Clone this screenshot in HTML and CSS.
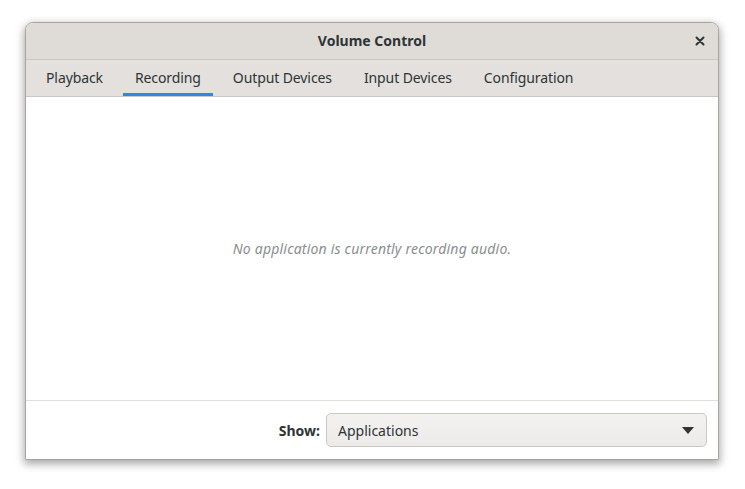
FILE: index.html
```html
<!DOCTYPE html>
<html>
<head>
<meta charset="utf-8">
<link rel="stylesheet" href="styles.css">
</head>
<body>
<div class="window">
  <div class="titlebar">
    <div class="title">Volume Control</div>
    <div class="close">
      <svg width="10" height="10" viewBox="0 0 10 10"><path d="M1.5 1.5 L8.5 8.5 M8.5 1.5 L1.5 8.5" stroke="#2e3436" stroke-width="2" stroke-linecap="round"/></svg>
    </div>
  </div>
  <div class="tabs">
    <div class="tab">Playback</div>
    <div class="tab active">Recording</div>
    <div class="tab">Output Devices</div>
    <div class="tab">Input Devices</div>
    <div class="tab">Configuration</div>
  </div>
  <div class="content">
    <div class="empty">No application is currently recording audio.</div>
  </div>
  <div class="footer">
    <span class="show">Show:</span>
    <div class="combo">
      <span>Applications</span>
      <svg width="12" height="7" viewBox="0 0 12 7"><path d="M0 0 L12 0 L6 7 Z" fill="#2e3436"/></svg>
    </div>
  </div>
</div>
</body>
</html>
```
FILE: styles.css
```css
html, body {
  margin: 0;
  padding: 0;
  background: #ffffff;
  width: 745px;
  height: 489px;
  overflow: hidden;
}
body {
  font-family: "Noto Sans", "Open Sans", sans-serif;
  font-size: 14px;
  color: #2e3436;
  padding: 22px 26px 0 25px;
  box-sizing: border-box;
}
.window {
  width: 694px;
  height: 438px;
  border: 1px solid #aaa49f;
  border-radius: 8px 8px 0 0;
  box-shadow: 0 3px 9px 1px rgba(0,0,0,0.35);
  display: flex;
  flex-direction: column;
  overflow: hidden;
  background: #ffffff;
  box-sizing: border-box;
}
.titlebar {
  height: 37px;
  flex: none;
  background: #dfdcd8;
  border-bottom: 1px solid #cdc7c2;
  display: flex;
  align-items: center;
  justify-content: center;
  position: relative;
  box-sizing: border-box;
}
.title {
  font-weight: bold;
  font-size: 14px;
  padding-bottom: 2px;
}
.close {
  position: absolute;
  right: 13px;
  top: 13px;
  width: 10px;
  height: 10px;
  display: flex;
}
.tabs {
  height: 37px;
  flex: none;
  background: #e3e0dd;
  border-bottom: 1px solid #cdc7c2;
  display: flex;
  padding-left: 4px;
  box-sizing: border-box;
}
.tab {
  padding: 1px 12px 0;
  margin: 0 4px;
  display: flex;
  align-items: center;
  border-bottom: 3px solid transparent;
  color: #2e3436;
  letter-spacing: -0.1px;
}
.tab.active {
  border-bottom-color: #3584e4;
}
.content {
  flex: 1;
  display: flex;
  align-items: center;
  justify-content: center;
  border-bottom: 1px solid #e0ddda;
}
.empty {
  font-style: italic;
  color: #8b8e8f;
  letter-spacing: 0.2px;
}
.footer {
  height: 58px;
  flex: none;
  display: flex;
  align-items: center;
  justify-content: flex-end;
  padding-right: 11px;
  gap: 6px;
}
.show {
  font-weight: bold;
}
.combo {
  width: 381px;
  height: 34px;
  box-sizing: border-box;
  border: 1px solid #cdc7c2;
  border-radius: 5px;
  background: linear-gradient(#f4f2f1, #edebe9);
  display: flex;
  align-items: center;
  justify-content: space-between;
  padding: 0 12px 0 11px;
}
```
